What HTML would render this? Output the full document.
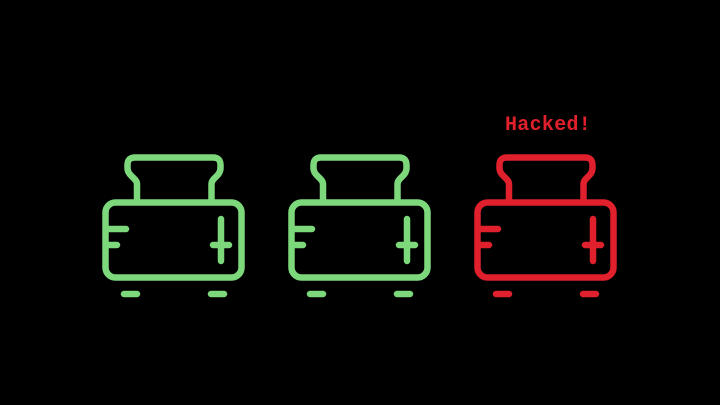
<!DOCTYPE html>
<html><head><style>html,body{margin:0;padding:0;background:#000;width:720px;height:405px;overflow:hidden}
svg{position:absolute;left:0;top:0}
.t{position:absolute;left:505px;top:114px;font:bold 20px "Liberation Mono",monospace;color:#e0202c;letter-spacing:0.3px}
</style></head><body>
<svg width="720" height="405" viewBox="0 0 720 405">
<defs>
<g id="toaster" fill="none" stroke-width="6.5" stroke-linecap="round" stroke-linejoin="round">
<rect x="105.5" y="202.5" width="136" height="75" rx="10"/>
<path d="M137,202 V184 C137,178 127.5,176 127.5,168 V165 Q127.5,157.5 135,157.5 H213 Q220.5,157.5 220.5,165 V168 C220.5,176 211.5,178 211.5,184 V202"/>
<path d="M106,229 H126 M106,245 H117 M221,219 V261 M213,245 H229 M124,294 H137 M211,294 H224"/>
</g>
</defs>
<use href="#toaster" stroke="#7dd87b"/>
<use href="#toaster" stroke="#7dd87b" transform="translate(186,0)"/>
<use href="#toaster" stroke="#e0202c" transform="translate(372,0)"/>
</svg>
<div class="t">Hacked!</div>
</body></html>
